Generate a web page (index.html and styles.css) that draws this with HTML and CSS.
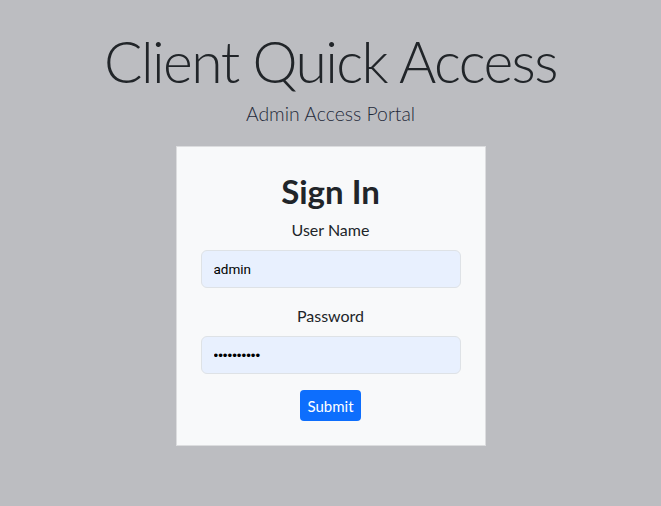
FILE: index.html
```html
<!DOCTYPE html>
<html lang="en">
<head>
<meta charset="utf-8">
<title>Client Quick Access</title>
<link rel="stylesheet" href="styles.css">
</head>
<body>
<main class="page">
  <h1 class="title">Client Quick Access</h1>
  <p class="subtitle">Admin Access Portal</p>
  <form class="card">
    <h2 class="card-title">Sign In</h2>
    <label class="label" for="user">User Name</label>
    <input class="field" id="user" type="text" value="admin">
    <label class="label label-pw" for="pw">Password</label>
    <input class="field field-pw" id="pw" type="password" value="1234567890">
    <button class="btn" type="button">Submit</button>
  </form>
</main>
</body>
</html>
```
FILE: styles.css
```css
html, body {
  margin: 0;
  padding: 0;
}
body {
  background: #bcbdc1;
  color: #212529;
  font-family: Lato, "Open Sans", sans-serif;
}
.page {
  display: flex;
  flex-direction: column;
  align-items: center;
  padding-top: 27px;
}
.title {
  margin: 0;
  font-size: 57px;
  font-weight: 300;
  line-height: 68px;
  letter-spacing: -1.6px;
  color: #212529;
}
.subtitle {
  margin: 4px 0 0;
  font-size: 19.4px;
  font-weight: 300;
  line-height: 30px;
  color: #1f2a3a;
}
.card {
  box-sizing: border-box;
  width: 310px;
  margin-top: 17px;
  padding: 24px;
  background: #f8f9fa;
  border: 1px solid #dcdddf;
  display: flex;
  flex-direction: column;
  align-items: center;
}
.card-title {
  margin: 0 0 7px;
  font-size: 33px;
  font-weight: 700;
  line-height: 40px;
}
.label {
  font-size: 16px;
  line-height: 24px;
  margin-bottom: 8px;
}
.label-pw {
  margin-top: 16px;
}
.field {
  box-sizing: border-box;
  width: 100%;
  height: 38px;
  margin: 0;
  padding: 0 12px;
  border: 1px solid #dee2e6;
  border-radius: 6px;
  background: #e8f0fe;
  font-family: Roboto, "Liberation Sans", Arial, sans-serif;
  font-size: 13.5px;
  color: #000;
  outline: none;
}
.field-pw {
  font-family: "Liberation Sans", Arial, sans-serif;
  font-size: 13.33px;
}
.btn {
  margin-top: 16px;
  height: 31px;
  padding: 0 7.5px;
  border: 0;
  border-radius: 4px;
  background: #0d6efd;
  color: #fff;
  font-family: Lato, sans-serif;
  font-size: 15px;
}
```
